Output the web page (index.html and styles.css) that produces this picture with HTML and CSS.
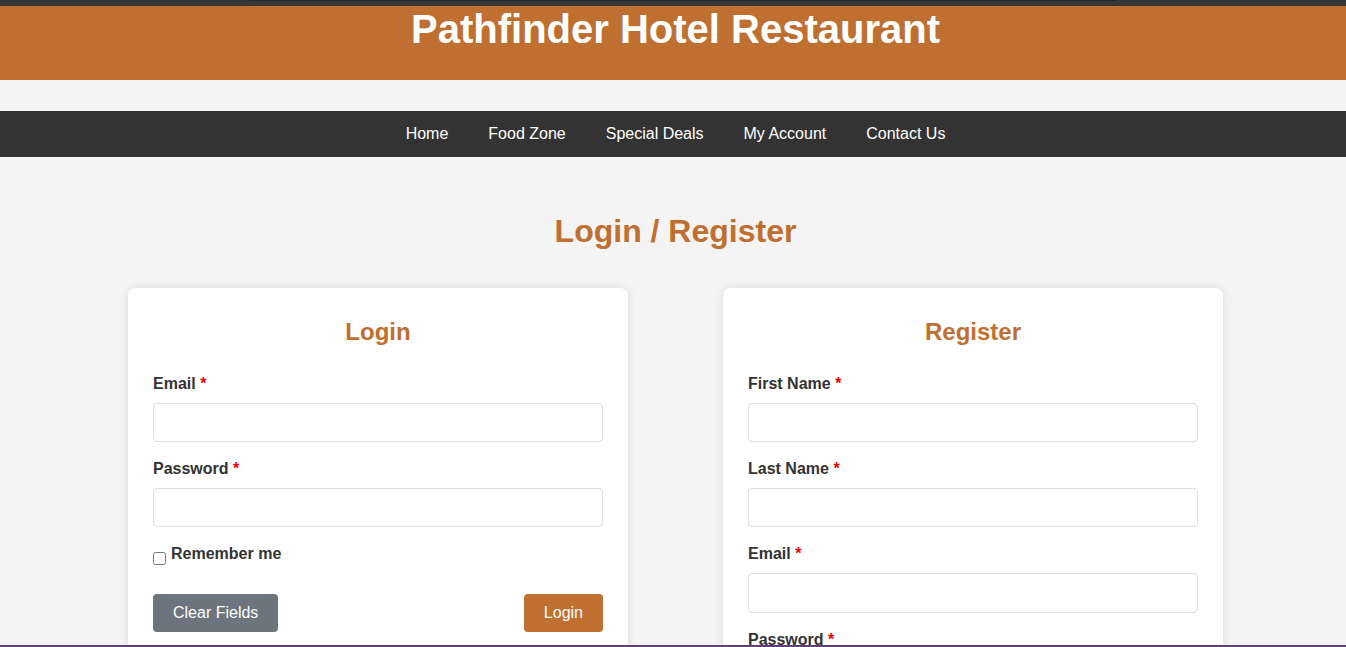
FILE: index.html
```html
<!DOCTYPE html>
<html lang="en">
<head>
<meta charset="utf-8">
<title>Login / Register - Pathfinder Hotel Restaurant</title>
<link rel="stylesheet" href="styles.css">
</head>
<body>
<div class="topstrip"><div class="topstrip-line"></div></div>
<header class="site-header">
  <h1 class="site-title">Pathfinder Hotel Restaurant</h1>
</header>
<nav class="main-nav">
  <a href="#" class="nav-link">Home</a>
  <a href="#" class="nav-link">Food Zone</a>
  <a href="#" class="nav-link">Special Deals</a>
  <a href="#" class="nav-link">My Account</a>
  <a href="#" class="nav-link">Contact Us</a>
</nav>
<main class="page">
  <h2 class="page-title">Login / Register</h2>
  <div class="cards">
    <section class="card">
      <h3 class="card-title">Login</h3>
      <form class="form">
        <div class="group">
          <label class="label">Email <span class="req">*</span></label>
          <input type="text" class="input">
        </div>
        <div class="group">
          <label class="label">Password <span class="req">*</span></label>
          <input type="password" class="input">
        </div>
        <div class="remember">
          <input type="checkbox" class="check">
          <span class="label-inline">Remember me</span>
        </div>
        <div class="actions">
          <button type="button" class="btn btn-gray">Clear Fields</button>
          <button type="button" class="btn btn-orange">Login</button>
        </div>
      </form>
    </section>
    <section class="card">
      <h3 class="card-title">Register</h3>
      <form class="form">
        <div class="group">
          <label class="label">First Name <span class="req">*</span></label>
          <input type="text" class="input">
        </div>
        <div class="group">
          <label class="label">Last Name <span class="req">*</span></label>
          <input type="text" class="input">
        </div>
        <div class="group">
          <label class="label">Email <span class="req">*</span></label>
          <input type="text" class="input">
        </div>
        <div class="group">
          <label class="label">Password <span class="req">*</span></label>
          <input type="password" class="input">
        </div>
        <div class="group">
          <label class="label">Confirm Password <span class="req">*</span></label>
          <input type="password" class="input">
        </div>
        <div class="actions">
          <button type="button" class="btn btn-gray">Clear Fields</button>
          <button type="button" class="btn btn-orange">Register</button>
        </div>
      </form>
    </section>
  </div>
</main>
<div class="bottom-line"></div>
</body>
</html>
```
FILE: styles.css
```css
* { box-sizing: border-box; }
html, body { margin: 0; padding: 0; }
body {
  background: #f4f4f4;
  font-family: "Liberation Sans", Arial, sans-serif;
  color: #333;
  padding-left: 5px;
}
.topstrip {
  height: 6px;
  background: #37373b;
  margin-left: -5px;
  display: flex;
  justify-content: flex-start;
}
.topstrip-line {
  height: 1px;
  width: 867px;
  margin-left: 249px;
  background: #26262a;
}
.site-header {
  background: #bf6f30;
  height: 74px;
  margin-left: -5px;
  padding-left: 5px;
}
.site-title {
  margin: 0;
  color: #fff;
  font-size: 40px;
  font-weight: bold;
  text-align: center;
  line-height: 46px;
}
.main-nav {
  margin-top: 31px;
  margin-left: -5px;
  padding-left: 5px;
  height: 46px;
  background: #333;
  display: flex;
  justify-content: center;
  align-items: center;
}
.nav-link {
  color: #fff;
  text-decoration: none;
  font-size: 16px;
  padding: 0 20px;
}
.page {
  padding-top: 56px;
  padding-bottom: 40px;
}
.page-title {
  margin: 0 0 38px;
  text-align: center;
  color: #bf6f30;
  font-size: 32px;
  font-weight: bold;
  line-height: 37px;
}
.cards {
  display: grid;
  grid-template-columns: 500px 500px;
  gap: 95px;
  justify-content: center;
  align-items: start;
}
.card {
  background: #fff;
  border-radius: 8px;
  box-shadow: 0 0 10px rgba(0, 0, 0, 0.1);
  padding: 30px 25px 25px;
}
.card-title {
  margin: 0 0 28.5px;
  text-align: center;
  color: #bf6f30;
  font-size: 24px;
  font-weight: bold;
  line-height: 28px;
}
.group { margin-bottom: 18.1px; }
.label {
  display: block;
  font-weight: bold;
  font-size: 16px;
  line-height: 18.4px;
  margin-bottom: 9.6px;
  color: #333;
}
.req { color: #e00; }
.input {
  display: block;
  width: 100%;
  height: 39.4px;
  border: 1px solid #ddd;
  border-radius: 4px;
  background: #fff;
  font-size: 16px;
  font-family: inherit;
  padding: 8px 10px;
}
.remember {
  display: flex;
  align-items: flex-start;
  margin-bottom: 29px;
}
.check {
  width: 13px;
  height: 13px;
  margin: 6.4px 5px 0 0;
}
.label-inline {
  font-weight: bold;
  font-size: 16px;
  line-height: 18.4px;
}
.actions {
  display: flex;
  justify-content: space-between;
}
.btn {
  border: none;
  border-radius: 4px;
  color: #fff;
  font-size: 16px;
  font-family: inherit;
  line-height: 18px;
  padding: 10px 20px;
  cursor: pointer;
}
.btn-gray { background: #6c757d; }
.btn-orange { background: #bf6f30; }
.bottom-line {
  position: fixed;
  left: 0;
  right: 0;
  bottom: 0;
  height: 2px;
  background: #623e7c;
}
```
